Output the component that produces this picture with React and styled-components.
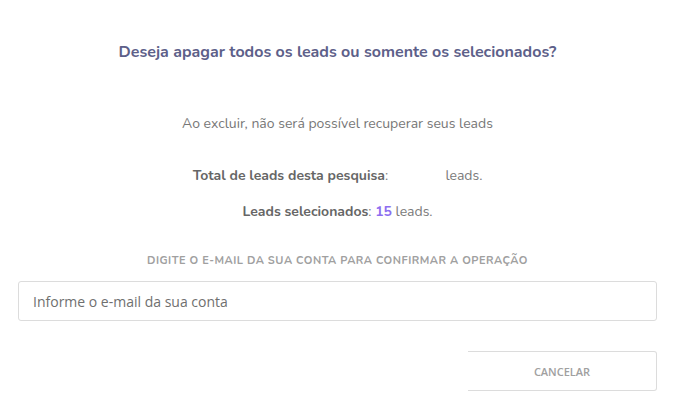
import React from 'react';
import styled, { createGlobalStyle } from 'styled-components';

const GlobalStyle = createGlobalStyle`
  html, body {
    margin: 0;
    padding: 0;
    background: #fff;
  }
  body {
    font-family: 'Nunito', 'Lato', 'Noto Sans', sans-serif;
  }
`;

const Modal = styled.div`
  width: 680px;
  height: 410px;
  box-sizing: border-box;
  padding: 40px 23px 0 18px;
  display: flex;
  flex-direction: column;
  align-items: center;
`;

const Title = styled.h2`
  margin: 0;
  font-size: 16px;
  font-weight: 700;
  color: #5d6089;
  line-height: 24px;
`;

const Notice = styled.p`
  margin: 48px 0 0;
  font-size: 14px;
  color: #777;
  line-height: 24px;
`;

const Info = styled.p`
  margin: ${p => p.first ? '28px' : '12px'} 0 0;
  font-size: 14px;
  color: #7a7a7a;
  line-height: 24px;
  b {
    color: #666;
    font-weight: 700;
  }
`;

const Blank = styled.span`
  display: inline-block;
  width: 50px;
`;

const Count = styled.b`
  && {
    color: #8d6ef0;
  }
`;

const Label = styled.label`
  margin-top: 29px;
  font-size: 11px;
  font-weight: 700;
  letter-spacing: 0.5px;
  color: #a0a0a0;
  text-transform: uppercase;
  line-height: 16px;
`;

const Input = styled.input`
  margin-top: 12px;
  align-self: stretch;
  height: 40px;
  box-sizing: border-box;
  border: 1px solid #dcdcdc;
  border-radius: 3px;
  padding: 0 14px;
  font-family: 'Open Sans', sans-serif;
  font-size: 14px;
  color: #555;
  outline: none;
  &::placeholder {
    color: #6f6f6f;
  }
`;

const Actions = styled.div`
  align-self: stretch;
  display: flex;
  justify-content: flex-end;
  margin-top: 30px;
`;

const CancelButton = styled.button`
  width: 189px;
  height: 40px;
  background: #fff;
  border: 1px solid #dcdcdc;
  border-left: none;
  border-radius: 0 3px 3px 0;
  font-family: 'Open Sans', sans-serif;
  font-size: 11px;
  font-weight: 600;
  color: #a0a0a0;
  cursor: pointer;
`;

function App() {
  return (
    <>
      <GlobalStyle />
      <Modal>
        <Title>Deseja apagar todos os leads ou somente os selecionados?</Title>
        <Notice>Ao excluir, não será possível recuperar seus leads</Notice>
        <Info first>
          <b>Total de leads desta pesquisa</b>: <Blank /> leads.
        </Info>
        <Info>
          <b>Leads selecionados</b>: <Count>15</Count> leads.
        </Info>
        <Label htmlFor="email">Digite o e-mail da sua conta para confirmar a operação</Label>
        <Input id="email" type="email" placeholder="Informe o e-mail da sua conta" />
        <Actions>
          <CancelButton>CANCELAR</CancelButton>
        </Actions>
      </Modal>
    </>
  );
}

export default App;
